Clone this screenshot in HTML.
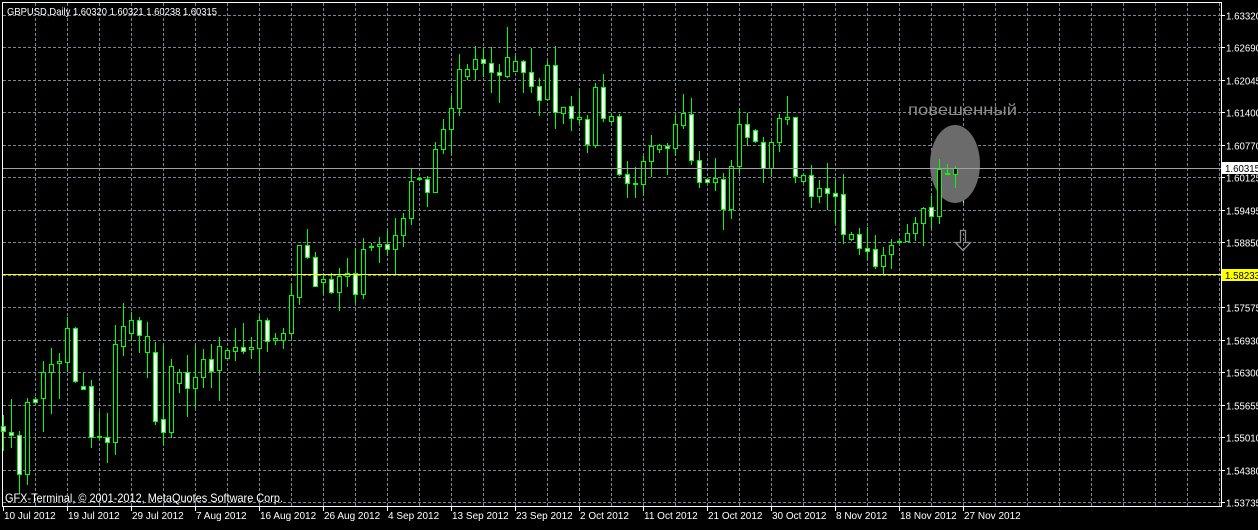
<!DOCTYPE html>
<html><head><meta charset="utf-8"><style>
html,body{margin:0;padding:0;background:#000;width:1258px;height:530px;overflow:hidden}
svg{display:block}
text{font-family:"Liberation Sans",sans-serif;}
</style></head><body>
<svg id="s" width="1258" height="530" xmlns="http://www.w3.org/2000/svg">
<rect width="1258" height="530" fill="#000"/>
<g id="grid" stroke="#7a8590" stroke-width="1" stroke-dasharray="3,2" shape-rendering="crispEdges"></g>
<rect x="2.5" y="2.5" width="1219" height="504" fill="none" stroke="#fff" stroke-width="1" shape-rendering="crispEdges"/>
<line x1="963.5" y1="130" x2="963.5" y2="203" stroke="#5ff" stroke-dasharray="3,2" shape-rendering="crispEdges"/>
<ellipse cx="955" cy="164" rx="25" ry="39" fill="#6b6b6b"/>
<g id="c" shape-rendering="crispEdges"></g>
<line x1="3" y1="168.5" x2="1221" y2="168.5" stroke="#a0a0a0" shape-rendering="crispEdges"/>
<line x1="3" y1="274.5" x2="1221" y2="274.5" stroke="#ffff00" shape-rendering="crispEdges"/>
<text x="908" y="115" font-size="16" fill="#8c8c8c" textLength="109" lengthAdjust="spacingAndGlyphs">повешенный</text>
<path d="M960.5 230.5 h5 v12 h5 l-7.5 8 l-7.5 -8 h5 z" fill="none" stroke="#8c8c8c" stroke-width="1.3"/>
<text x="7" y="15" font-size="10.5" fill="#fff" textLength="210" lengthAdjust="spacingAndGlyphs">GBPUSD,Daily  1.60320 1.60321 1.60238 1.60315</text>
<text x="5" y="502" font-size="12" fill="#fff" textLength="278" lengthAdjust="spacingAndGlyphs">GFX-Terminal, © 2001-2012, MetaQuotes Software Corp.</text>
<g id="ax" font-size="10" fill="#fff"></g>
<rect x="1222" y="162" width="36" height="12" fill="#fff"/>
<text x="1225" y="172" font-size="10" fill="#000" textLength="35" lengthAdjust="spacingAndGlyphs">1.60315</text>
<rect x="1222" y="269" width="36" height="12" fill="#ffff00"/>
<text x="1225" y="279" font-size="10" fill="#000" textLength="35" lengthAdjust="spacingAndGlyphs">1.58233</text>
</svg>
<script>
var NS="http://www.w3.org/2000/svg";
function el(p,t,a,txt){var e=document.createElementNS(NS,t);for(var k in a)e.setAttribute(k,a[k]);if(txt)e.textContent=txt;p.appendChild(e);return e;}
var g=document.getElementById('grid'),ax=document.getElementById('ax'),c=document.getElementById('c');
var labs=["1.63320","1.62690","1.62045","1.61400","1.60770","1.60125","1.59495","1.58850","","1.57575","1.56930","1.56300","1.55655","1.55010","1.54380","1.53735"];
for(var i=0;i<16;i++){var y=Math.round(15+i*32.47)+0.5;el(g,'line',{x1:3,y1:y,x2:1221,y2:y});
 el(ax,'line',{x1:1221,y1:y,x2:1225,y2:y,stroke:'#fff'});
 if(labs[i])el(ax,'text',{x:1226,y:y+4,textLength:35,lengthAdjust:'spacingAndGlyphs'},labs[i]);}
for(var x=35;x<1221;x+=32){el(g,'line',{x1:x+0.5,y1:3,x2:x+0.5,y2:506});}
var dates=["10 Jul 2012","19 Jul 2012","29 Jul 2012","7 Aug 2012","16 Aug 2012","26 Aug 2012","4 Sep 2012","13 Sep 2012","23 Sep 2012","2 Oct 2012","11 Oct 2012","21 Oct 2012","30 Oct 2012","8 Nov 2012","18 Nov 2012","27 Nov 2012"];
for(var i=0;i<dates.length;i++){var x=3+64*i;el(ax,'line',{x1:x+0.5,y1:506,x2:x+0.5,y2:511,stroke:'#fff'});el(ax,'text',{x:x+1,y:519},dates[i]);}
var D=[
[1245,1350,1278,1293,1],[1198,1340,1295,1305,1],[1293,1480,1305,1423,1],[1195,1452,1205,1423,0],[1190,1210,1197,1205,1],
[1082,1292,1115,1195,0],[1045,1240,1092,1117,0],[1060,1195,1083,1090,0],[950,1112,985,1085,0],[980,1145,985,1143,1],
[1115,1165,1157,1167,1],[1140,1340,1157,1312,1],[1232,1318,1309,1312,0],[1240,1385,1312,1327,1],[975,1362,1033,1327,0],
[908,1065,977,1037,0],[935,1020,960,998,0],[950,1055,960,1005,1],[965,1130,1007,1055,0],[1025,1272,1055,1262,1],
[1035,1332,1257,1297,1],[1078,1312,1098,1297,0],[1108,1175,1115,1150,0],[1065,1248,1115,1165,1],[1035,1220,1130,1165,0],
[1048,1160,1078,1132,0],[1033,1160,1078,1113,1],[1010,1200,1038,1111,0],[1045,1075,1050,1073,0],[985,1080,1041,1052,0],
[968,1058,1042,1052,1],[1010,1075,1042,1048,0],[945,1112,960,1043,0],[953,1052,960,1022,1],[998,1032,1013,1020,0],
[985,1045,998,1020,0],[852,1012,886,998,0],[735,912,735,890,0],[687,775,735,770,1],[755,858,770,857,1],
[820,880,837,845,0],[818,878,838,877,1],[805,930,828,877,0],[775,858,818,828,0],[745,905,818,883,1],
[713,895,747,883,0],[730,750,737,740,0],[711,785,731,738,0],[693,765,732,747,1],[655,823,705,747,0],
[640,737,655,705,0],[505,672,542,655,0],[530,540,534,537,0],[528,617,537,575,1],[425,577,448,575,0],
[358,458,388,448,0],[288,458,323,388,0],[163,345,208,323,0],[193,237,208,227,0],[137,237,176,208,0],
[145,228,176,190,1],[140,275,190,217,1],[192,307,217,225,1],[80,230,170,227,0],[167,210,184,213,0],
[180,277,184,217,1],[145,277,217,258,1],[235,345,258,300,1],[183,300,196,298,0],[137,383,196,337,1],
[320,370,321,338,0],[288,390,318,353,1],[270,368,352,356,0],[345,455,357,433,1],[248,440,262,435,0],
[223,362,262,355,1],[340,365,347,362,0],[343,525,347,522,1],[483,590,522,550,1],[500,590,549,553,0],
[468,582,483,551,0],[405,528,437,483,0],[433,455,435,448,0],[430,522,437,444,1],[345,465,373,445,0],
[282,385,340,374,0],[293,493,342,480,1],[453,562,481,545,1],[533,547,537,545,1],[473,570,533,545,0],
[518,688,537,628,1],[480,653,498,628,0],[325,515,373,498,0],[338,435,373,412,1],[388,425,390,423,1],
[410,547,425,503,1],[423,527,427,503,0],[343,453,355,427,0],[288,372,352,356,0],[350,545,352,528,1],
[522,545,525,543,0],[495,620,525,587,1],[540,607,565,587,0],[488,627,563,580,1],[540,670,580,587,1],
[523,728,583,702,1],[697,720,702,717,0],[685,762,703,745,1],[682,777,743,752,1],[705,803,748,797,1],
[740,818,765,797,0],[717,805,735,763,0],[717,728,722,725,0],[672,723,698,723,0],[650,720,670,698,0],
[620,735,625,670,0],[587,683,622,648,1],[477,668,508,648,0],[493,522,518,522,0],[497,560,505,522,0]];
for(var k=0;k<D.length;k++){var d=D[k],cx=Math.round(3.3+8*k);
 var h=Math.round(d[0]/3),l=Math.round(d[1]/3),t=Math.round(d[2]/3),b=Math.round(d[3]/3);
 el(c,'line',{x1:cx+0.5,y1:h,x2:cx+0.5,y2:l+1,stroke:'#00ff00'});
 if(b-t<1){el(c,'line',{x1:cx-2,y1:t+0.5,x2:cx+3,y2:t+0.5,stroke:'#00ff00'});}
 else el(c,'rect',{x:cx-1.5,y:t+0.5,width:4,height:b-t,fill:d[4]?'#fff':'#000',stroke:'#00ff00'});}
</script>
</body></html>
